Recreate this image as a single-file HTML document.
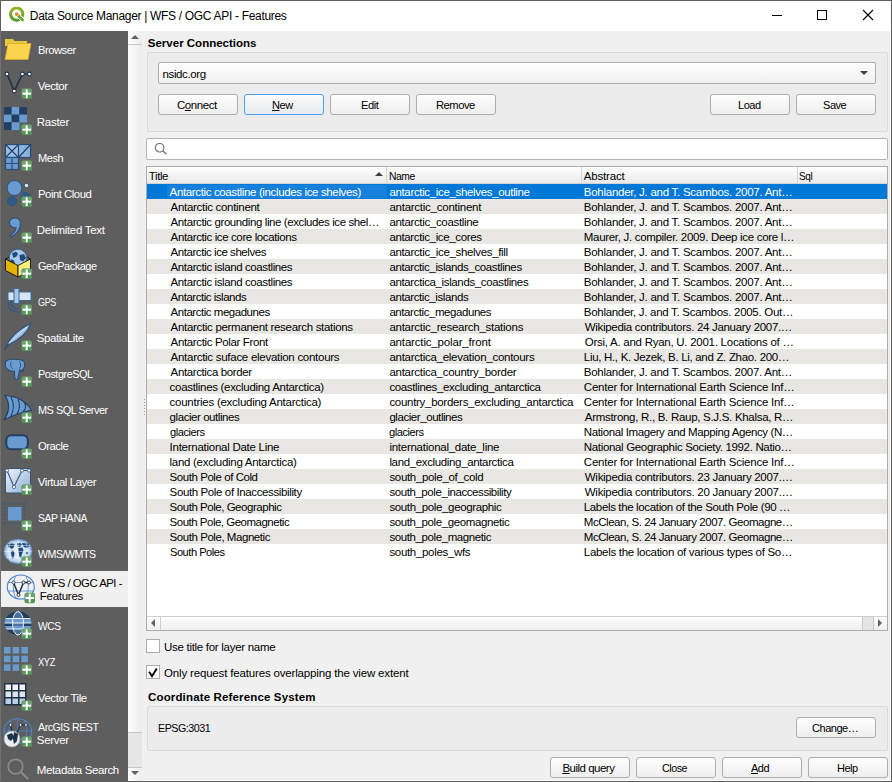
<!DOCTYPE html><html><head><meta charset='utf-8'><style>
*{box-sizing:border-box;margin:0;padding:0}
html,body{width:892px;height:782px;overflow:hidden;background:#f0f0f0}
body{font-family:"Liberation Sans",sans-serif;font-size:12px;color:#000;position:relative}
.a{position:absolute}
.tx{position:absolute;white-space:nowrap;line-height:14px}
.tx u{text-decoration:underline;text-decoration-thickness:1px;text-underline-offset:0.5px}
.btn{position:absolute;height:21px;border:1px solid #adadad;border-radius:3px;background:linear-gradient(#fdfdfd,#efefef)}
.grp{position:absolute;border:1px solid #dadada;border-radius:2px;background:#ececec}
</style></head><body>
<div class='a' style='left:0;top:0;width:892px;height:782px;border:1px solid #5f5f5f;background:#f0f0f0'></div>
<div class='a' style='left:1px;top:1px;width:890px;height:30px;background:#fff'></div>
<svg class='a' style='left:8px;top:7px' width='18' height='17' viewBox='0 0 18 17'>
<defs><linearGradient id='lg' x1='0' y1='0' x2='0' y2='1'><stop offset='0' stop-color='#93b41c'/><stop offset='1' stop-color='#589a2c'/></linearGradient></defs>
<path d='M11.75 12.3 A6.1 6.1 0 1 1 13.98 10.05' fill='none' stroke='url(#lg)' stroke-width='3'/>
<path d='M10.2 8.7 L14.8 13' stroke='#fff' stroke-width='4.4' stroke-linecap='round'/>
<path d='M10.2 8.7 L14.8 13' stroke='#64a83a' stroke-width='2.6' stroke-linecap='round'/>
<circle cx='8.7' cy='7.3' r='1.8' fill='#f07a1a'/>
<circle cx='9.8' cy='8.4' r='1' fill='#f3c23a'/>
</svg>
<div id='ttl' class='tx' style='left:29.80px;top:9px;font-size:12px;font-weight:normal;letter-spacing:-0.315px;color:#000'>Data Source Manager | WFS / OGC API - Features</div>
<div class='a' style='left:772px;top:15px;width:10px;height:1px;background:#000'></div>
<div class='a' style='left:817px;top:10px;width:10px;height:10px;border:1px solid #000'></div>
<svg class='a' style='left:862px;top:9px' width='12' height='12' viewBox='0 0 12 12'><path d='M1 1 L11 11 M11 1 L1 11' stroke='#000' stroke-width='1.1'/></svg>
<div class='a' style='left:1px;top:31px;width:127px;height:750px;background:#5e5e5e'></div>
<div class='a' style='left:1px;top:571px;width:127px;height:36px;background:#f0f0f0'></div>
<div class='a' style='left:0;top:31px;width:1px;height:750px;background:#727272'></div>
<div class='a' style='left:890px;top:31px;width:1px;height:750px;background:#fafafa'></div>
<div class='a' style='left:142px;top:780px;width:749px;height:1px;background:#fafafa'></div>
<svg class='a' style='left:0;top:31px' width='40' height='36' viewBox='0 0 40 36'><path d='M5 8 L13 8 L14.5 10 L27 10 L27 15 L5 15Z' fill='#e9c53e'/><path d='M8 12.5 L31 12.5 L28 28.5 L5 28.5Z' fill='#f9d44c' stroke='#d6ae2c' stroke-width='0.8'/></svg>
<svg class='a' style='left:0;top:67px' width='40' height='36' viewBox='0 0 40 36'><path d='M7 7 L14.3 24 L22.4 7 L29.4 7' fill='none' stroke='#22324a' stroke-width='1.7'/><circle cx='7' cy='7' r='1.9' fill='#fff' stroke='#22324a' stroke-width='1.1'/><circle cx='22.4' cy='7' r='1.9' fill='#fff' stroke='#22324a' stroke-width='1.1'/><circle cx='29.4' cy='7' r='1.9' fill='#fff' stroke='#22324a' stroke-width='1.1'/><circle cx='14.3' cy='24' r='1.9' fill='#fff' stroke='#22324a' stroke-width='1.1'/><rect x='21.5' y='21.5' width='10.5' height='10.5' rx='2' fill='#55955a'/><rect x='21.5' y='21.5' width='10.5' height='5' rx='2' fill='#7fb07f' opacity='0.5'/><rect x='25.7' y='22.4' width='2' height='8.7' fill='#fff'/><rect x='22.4' y='25.7' width='8.7' height='2' fill='#fff'/></svg>
<svg class='a' style='left:0;top:103px' width='40' height='36' viewBox='0 0 40 36'><rect x='4.00' y='4.00' width='7.72' height='7.72' fill='#213e63'/><rect x='11.67' y='4.00' width='7.72' height='7.72' fill='#6a9bd0'/><rect x='19.34' y='4.00' width='7.72' height='7.72' fill='#213e63'/><rect x='4.00' y='11.67' width='7.72' height='7.72' fill='#6a9bd0'/><rect x='11.67' y='11.67' width='7.72' height='7.72' fill='#213e63'/><rect x='19.34' y='11.67' width='7.72' height='7.72' fill='#6a9bd0'/><rect x='4.00' y='19.34' width='7.72' height='7.72' fill='#213e63'/><rect x='11.67' y='19.34' width='7.72' height='7.72' fill='#6a9bd0'/><rect x='21.5' y='21.5' width='10.5' height='10.5' rx='2' fill='#55955a'/><rect x='21.5' y='21.5' width='10.5' height='5' rx='2' fill='#7fb07f' opacity='0.5'/><rect x='25.7' y='22.4' width='2' height='8.7' fill='#fff'/><rect x='22.4' y='25.7' width='8.7' height='2' fill='#fff'/></svg>
<svg class='a' style='left:0;top:139px' width='40' height='36' viewBox='0 0 40 36'><rect x='5.5' y='5.5' width='13' height='13' fill='#9dc0e6' stroke='#2a4d78' stroke-width='1.2'/><path d='M5.5 5.5 L18.5 18.5 M18.5 5.5 L5.5 18.5' stroke='#213e63' stroke-width='1.2'/><rect x='18.5' y='5.5' width='12' height='13' fill='#8ab3e0' stroke='#2a4d78' stroke-width='1.2'/><path d='M30.5 5.5 L18.5 18.5' stroke='#213e63' stroke-width='1.2'/><rect x='5.5' y='18.5' width='13' height='12' fill='#6a9bd0' stroke='#2a4d78' stroke-width='1.2'/><path d='M12 18.5 L12 30.5 M5.5 24.5 L18.5 24.5' stroke='#2a4d78' stroke-width='1.2'/><rect x='21.5' y='21.5' width='10.5' height='10.5' rx='2' fill='#55955a'/><rect x='21.5' y='21.5' width='10.5' height='5' rx='2' fill='#7fb07f' opacity='0.5'/><rect x='25.7' y='22.4' width='2' height='8.7' fill='#fff'/><rect x='22.4' y='25.7' width='8.7' height='2' fill='#fff'/></svg>
<svg class='a' style='left:0;top:175px' width='40' height='36' viewBox='0 0 40 36'><circle cx='14.5' cy='13' r='7.5' fill='#6a9bd0' stroke='#2a4d78' stroke-width='1'/><circle cx='26.5' cy='10.5' r='2.3' fill='#d5e3f0' stroke='#2a4d78' stroke-width='1'/><circle cx='12' cy='26' r='4.5' fill='#2f5a88' stroke='#2a4d78' stroke-width='0.8'/><circle cx='25.5' cy='22' r='5' fill='#2f5a88'/><rect x='21.5' y='21.5' width='10.5' height='10.5' rx='2' fill='#55955a'/><rect x='21.5' y='21.5' width='10.5' height='5' rx='2' fill='#7fb07f' opacity='0.5'/><rect x='25.7' y='22.4' width='2' height='8.7' fill='#fff'/><rect x='22.4' y='25.7' width='8.7' height='2' fill='#fff'/></svg>
<svg class='a' style='left:0;top:211px' width='40' height='36' viewBox='0 0 40 36'><path d='M9.5 12 C9.5 8.5 12 7 15 7 C18.5 7 20.5 9.5 20.5 13 C20.5 18 17 22.5 11.5 26 L10.2 24.8 C14 22 15.8 19.5 16 16.8 C12.5 16.8 9.5 15 9.5 12Z' fill='#6a9bd0' stroke='#2a4d78' stroke-width='1.1'/><rect x='21.5' y='21.5' width='10.5' height='10.5' rx='2' fill='#55955a'/><rect x='21.5' y='21.5' width='10.5' height='5' rx='2' fill='#7fb07f' opacity='0.5'/><rect x='25.7' y='22.4' width='2' height='8.7' fill='#fff'/><rect x='22.4' y='25.7' width='8.7' height='2' fill='#fff'/></svg>
<svg class='a' style='left:0;top:247px' width='40' height='36' viewBox='0 0 40 36'><circle cx='18' cy='11' r='8.8' fill='#a9c9ea' stroke='#2a5a90' stroke-width='0.8'/><path d='M12 6.5 L16 4.5 L18 7 L16.5 9.5 L13.5 11Z M19.5 8 L24 7 L26 11 L23 14.5 L20 13Z M11 12 L14 13.5 L15 17 L12 18 L10 15Z' fill='#1f4a7a'/><path d='M5.5 12 L9 10 M30.5 12 L27 10' stroke='#111' stroke-width='0.9'/><path d='M5.5 12 L18 18.5 L18 30 L5.5 23.5Z' fill='#e2b400' stroke='#111' stroke-width='0.9'/><path d='M18 18.5 L30.5 12 L30.5 23.5 L18 30Z' fill='#f8ef7a' stroke='#111' stroke-width='0.9'/><rect x='21.5' y='21.5' width='10.5' height='10.5' rx='2' fill='#55955a'/><rect x='21.5' y='21.5' width='10.5' height='5' rx='2' fill='#7fb07f' opacity='0.5'/><rect x='25.7' y='22.4' width='2' height='8.7' fill='#fff'/><rect x='22.4' y='25.7' width='8.7' height='2' fill='#fff'/></svg>
<svg class='a' style='left:0;top:283px' width='40' height='36' viewBox='0 0 40 36'><rect x='8' y='9' width='23' height='8.5' fill='#d8e6f4' stroke='#3a6a9a' stroke-width='1'/><rect x='14' y='5.5' width='5' height='15' fill='#a8c6e6' stroke='#3a6a9a' stroke-width='1'/><path d='M16.5 20.5 L16.5 23' stroke='#3a6a9a' stroke-width='1'/><path d='M11 18 C11 23 14 26 19 26 M8 19 C8 26 12 29 19 29.5' fill='none' stroke='#2d5a8a' stroke-width='1.2'/><rect x='21.5' y='21.5' width='10.5' height='10.5' rx='2' fill='#55955a'/><rect x='21.5' y='21.5' width='10.5' height='5' rx='2' fill='#7fb07f' opacity='0.5'/><rect x='25.7' y='22.4' width='2' height='8.7' fill='#fff'/><rect x='22.4' y='25.7' width='8.7' height='2' fill='#fff'/></svg>
<svg class='a' style='left:0;top:319px' width='40' height='36' viewBox='0 0 40 36'><path d='M4.5 31 C8 22 14 12 31 4.5 C28 12 22 20 8 26 Z' fill='#9dbde0' stroke='#2a4d78' stroke-width='1.1'/><path d='M9 24 L27 8' stroke='#e8f0f8' stroke-width='0.9'/><rect x='21.5' y='21.5' width='10.5' height='10.5' rx='2' fill='#55955a'/><rect x='21.5' y='21.5' width='10.5' height='5' rx='2' fill='#7fb07f' opacity='0.5'/><rect x='25.7' y='22.4' width='2' height='8.7' fill='#fff'/><rect x='22.4' y='25.7' width='8.7' height='2' fill='#fff'/></svg>
<svg class='a' style='left:0;top:355px' width='40' height='36' viewBox='0 0 40 36'><path d='M7.5 5 C11 3.8 20 3.8 23.5 6 C25.3 8 25 12.5 23 14.5 C22 15.5 20.5 15.5 19.5 15 C19 18 18.8 21 17.5 24 C16.8 25 15.5 24.8 15 23.5 C14.3 21 14.5 18 14.5 16 C12 16.5 9 16 7 14 C4.5 11.5 4.5 6.5 7.5 5Z' fill='#6a9bd0' stroke='#2a4d78' stroke-width='1.1'/><path d='M11.5 6.5 C10 9 10.5 12.5 13 14 M19.5 6.5 C21 8.5 21 11.5 19.5 13.5 M20 16.5 L24 16' fill='none' stroke='#2a4d78' stroke-width='0.9'/><rect x='21.5' y='21.5' width='10.5' height='10.5' rx='2' fill='#55955a'/><rect x='21.5' y='21.5' width='10.5' height='5' rx='2' fill='#7fb07f' opacity='0.5'/><rect x='25.7' y='22.4' width='2' height='8.7' fill='#fff'/><rect x='22.4' y='25.7' width='8.7' height='2' fill='#fff'/></svg>
<svg class='a' style='left:0;top:391px' width='40' height='36' viewBox='0 0 40 36'><path d='M5 4.5 C16 5 25 9 31.5 19 C23 21 13 24 4 29 C10 20 10 12 5 4.5Z' fill='#6a9bd0' stroke='#213e63' stroke-width='1.2'/><path d='M11 6 C14 12 14 19 11 25 M18 8 C20 13 20 18 17 23 M24 11 C26 14 26 18 23 21' fill='none' stroke='#213e63' stroke-width='1.1'/><rect x='21.5' y='21.5' width='10.5' height='10.5' rx='2' fill='#55955a'/><rect x='21.5' y='21.5' width='10.5' height='5' rx='2' fill='#7fb07f' opacity='0.5'/><rect x='25.7' y='22.4' width='2' height='8.7' fill='#fff'/><rect x='22.4' y='25.7' width='8.7' height='2' fill='#fff'/></svg>
<svg class='a' style='left:0;top:427px' width='40' height='36' viewBox='0 0 40 36'><rect x='6.3' y='8.3' width='21.5' height='14' rx='5' fill='#6a9bd0' stroke='#213e63' stroke-width='2'/><rect x='21.5' y='21.5' width='10.5' height='10.5' rx='2' fill='#55955a'/><rect x='21.5' y='21.5' width='10.5' height='5' rx='2' fill='#7fb07f' opacity='0.5'/><rect x='25.7' y='22.4' width='2' height='8.7' fill='#fff'/><rect x='22.4' y='25.7' width='8.7' height='2' fill='#fff'/></svg>
<svg class='a' style='left:0;top:463px' width='40' height='36' viewBox='0 0 40 36'><defs><linearGradient id='vg' x1='0' y1='0' x2='1' y2='1'><stop offset='0' stop-color='#eef3f9'/><stop offset='1' stop-color='#8fb0d6'/></linearGradient></defs><rect x='5.5' y='5.5' width='25' height='24.5' rx='2' fill='url(#vg)' stroke='#34557d' stroke-width='1'/><path d='M7 7.5 L14 24 L22 7.5 L29 7.5' fill='none' stroke='#34557d' stroke-width='1.1'/><circle cx='7' cy='7.5' r='1.6' fill='#fff' stroke='#34557d' stroke-width='0.8'/><circle cx='22' cy='7.5' r='1.6' fill='#fff' stroke='#34557d' stroke-width='0.8'/><circle cx='29' cy='7.5' r='1.6' fill='#fff' stroke='#34557d' stroke-width='0.8'/><circle cx='14' cy='24' r='1.6' fill='#fff' stroke='#34557d' stroke-width='0.8'/><rect x='21.5' y='21.5' width='10.5' height='10.5' rx='2' fill='#55955a'/><rect x='21.5' y='21.5' width='10.5' height='5' rx='2' fill='#7fb07f' opacity='0.5'/><rect x='25.7' y='22.4' width='2' height='8.7' fill='#fff'/><rect x='22.4' y='25.7' width='8.7' height='2' fill='#fff'/></svg>
<svg class='a' style='left:0;top:499px' width='40' height='36' viewBox='0 0 40 36'><rect x='8' y='8' width='13.5' height='13.5' fill='#6a9bd0'/><rect x='3.7' y='4.2' width='1.6' height='1.6' fill='#2f5a88'/><rect x='3.7' y='23.7' width='1.6' height='1.6' fill='#2f5a88'/><rect x='3.7' y='3.7' width='1.6' height='1.6' fill='#2f5a88'/><rect x='23.7' y='3.7' width='1.6' height='1.6' fill='#2f5a88'/><rect x='7.6' y='4.2' width='1.6' height='1.6' fill='#2f5a88'/><rect x='7.6' y='23.7' width='1.6' height='1.6' fill='#2f5a88'/><rect x='3.7' y='7.6' width='1.6' height='1.6' fill='#2f5a88'/><rect x='23.7' y='7.6' width='1.6' height='1.6' fill='#2f5a88'/><rect x='11.5' y='4.2' width='1.6' height='1.6' fill='#2f5a88'/><rect x='11.5' y='23.7' width='1.6' height='1.6' fill='#2f5a88'/><rect x='3.7' y='11.5' width='1.6' height='1.6' fill='#2f5a88'/><rect x='23.7' y='11.5' width='1.6' height='1.6' fill='#2f5a88'/><rect x='15.4' y='4.2' width='1.6' height='1.6' fill='#2f5a88'/><rect x='15.4' y='23.7' width='1.6' height='1.6' fill='#2f5a88'/><rect x='3.7' y='15.4' width='1.6' height='1.6' fill='#2f5a88'/><rect x='23.7' y='15.4' width='1.6' height='1.6' fill='#2f5a88'/><rect x='19.3' y='4.2' width='1.6' height='1.6' fill='#2f5a88'/><rect x='19.3' y='23.7' width='1.6' height='1.6' fill='#2f5a88'/><rect x='3.7' y='19.3' width='1.6' height='1.6' fill='#2f5a88'/><rect x='23.7' y='19.3' width='1.6' height='1.6' fill='#2f5a88'/><rect x='23.2' y='4.2' width='1.6' height='1.6' fill='#2f5a88'/><rect x='23.2' y='23.7' width='1.6' height='1.6' fill='#2f5a88'/><rect x='3.7' y='23.2' width='1.6' height='1.6' fill='#2f5a88'/><rect x='23.7' y='23.2' width='1.6' height='1.6' fill='#2f5a88'/><rect x='21.5' y='21.5' width='10.5' height='10.5' rx='2' fill='#55955a'/><rect x='21.5' y='21.5' width='10.5' height='5' rx='2' fill='#7fb07f' opacity='0.5'/><rect x='25.7' y='22.4' width='2' height='8.7' fill='#fff'/><rect x='22.4' y='25.7' width='8.7' height='2' fill='#fff'/></svg>
<svg class='a' style='left:0;top:535px' width='40' height='36' viewBox='0 0 40 36'><defs><radialGradient id='wg' cx='0.5' cy='0.5' r='0.55'><stop offset='0' stop-color='#eef4fa'/><stop offset='0.7' stop-color='#c5d9ee'/><stop offset='1' stop-color='#6e9bd0'/></radialGradient></defs><ellipse cx='18' cy='16.4' rx='14' ry='12.1' fill='url(#wg)' stroke='#5a8ac0' stroke-width='0.9'/><path d='M7.5 9.5 L11 8.5 L14.5 9 L14 12 L12 14 L10.5 13 L8.5 12Z M11.5 15.5 L14 16 L14.5 19 L13 24 L11.8 22 L11 18Z M17 8.5 L20.5 8 L22 10 L20 12 L17.5 11.5Z M18 13 L22.5 12.5 L23.5 15.5 L22 19 L21 23 L19.5 22 L18.5 17Z M22 8 L28 8.5 L29.5 11 L27 13 L24 12 L22.5 10Z M26 17 L28 16.5 L28 19 L26.5 19.5Z' fill='#1f4a7a'/><path d='M4.5 16.4 L31.5 16.4 M6 10.5 L30 10.5 M6 22.3 L30 22.3 M18 4.3 L18 28.5 M11 5.5 C8 11 8 22 11 27.3 M25 5.5 C28 11 28 22 25 27.3' fill='none' stroke='#ffffff' stroke-width='0.6' opacity='0.75'/><rect x='21.5' y='21.5' width='10.5' height='10.5' rx='2' fill='#55955a'/><rect x='21.5' y='21.5' width='10.5' height='5' rx='2' fill='#7fb07f' opacity='0.5'/><rect x='25.7' y='22.4' width='2' height='8.7' fill='#fff'/><rect x='22.4' y='25.7' width='8.7' height='2' fill='#fff'/></svg>
<svg class='a' style='left:0;top:571px' width='40' height='36' viewBox='0 0 40 36'><ellipse cx='20.8' cy='16' rx='13.5' ry='12' fill='none' stroke='#4a86d0' stroke-width='1.1'/><path d='M7.8 11.5 L33.8 11.5 M7.5 20 L34 20 M16 4.8 C12.5 10 12.5 22 16 27.3 M25.6 4.8 C29.1 10 29.1 22 25.6 27.3' fill='none' stroke='#4a86d0' stroke-width='0.8'/><path d='M13.5 11.5 L18.5 24 L23.5 11.5 L29 11.5' fill='none' stroke='#1f2f44' stroke-width='1.5'/><circle cx='13.5' cy='11.5' r='1.5' fill='#fff' stroke='#1f2f44' stroke-width='0.9'/><circle cx='23.5' cy='11.5' r='1.5' fill='#fff' stroke='#1f2f44' stroke-width='0.9'/><circle cx='29' cy='11.5' r='1.5' fill='#fff' stroke='#1f2f44' stroke-width='0.9'/><circle cx='18.5' cy='24' r='1.5' fill='#fff' stroke='#1f2f44' stroke-width='0.9'/><rect x='24.5' y='21.8' width='10.5' height='10.5' rx='2' fill='#55955a'/><rect x='24.5' y='21.8' width='10.5' height='5' rx='2' fill='#7fb07f' opacity='0.5'/><rect x='28.7' y='22.7' width='2' height='8.7' fill='#fff'/><rect x='25.4' y='26.0' width='8.7' height='2' fill='#fff'/></svg>
<svg class='a' style='left:0;top:607px' width='40' height='36' viewBox='0 0 40 36'><defs><clipPath id='wcsc'><ellipse cx='18' cy='16.3' rx='13.5' ry='11.7'/></clipPath></defs><ellipse cx='18' cy='16.3' rx='13.5' ry='11.7' fill='#213e63'/><g clip-path='url(#wcsc)'><path d='M0 11.5 L36 11.5 L36 16 L0 16Z M0 19 L36 19 L36 22 L0 22Z' fill='#6a9bd0'/><ellipse cx='18' cy='16.3' rx='5.5' ry='11.7' fill='#6a9bd0' opacity='0.55'/><path d='M0 11.5 L36 11.5 M0 16 L36 16 M0 22 L36 22' stroke='#fff' stroke-width='0.9'/></g><ellipse cx='18' cy='16.3' rx='5.5' ry='11.7' fill='none' stroke='#fff' stroke-width='0.9'/><rect x='21.5' y='21.5' width='10.5' height='10.5' rx='2' fill='#55955a'/><rect x='21.5' y='21.5' width='10.5' height='5' rx='2' fill='#7fb07f' opacity='0.5'/><rect x='25.7' y='22.4' width='2' height='8.7' fill='#fff'/><rect x='22.4' y='25.7' width='8.7' height='2' fill='#fff'/></svg>
<svg class='a' style='left:0;top:643px' width='40' height='36' viewBox='0 0 40 36'><rect x='4.0' y='4.0' width='6.5' height='6.5' fill='#6a9bd0'/><rect x='12.7' y='4.0' width='6.5' height='6.5' fill='#6a9bd0'/><rect x='21.4' y='4.0' width='6.5' height='6.5' fill='#6a9bd0'/><rect x='4.0' y='12.7' width='6.5' height='6.5' fill='#6a9bd0'/><rect x='12.7' y='12.7' width='6.5' height='6.5' fill='#6a9bd0'/><rect x='21.4' y='12.7' width='6.5' height='6.5' fill='#6a9bd0'/><rect x='4.0' y='21.4' width='6.5' height='6.5' fill='#6a9bd0'/><rect x='12.7' y='21.4' width='6.5' height='6.5' fill='#6a9bd0'/><rect x='21.5' y='21.5' width='10.5' height='10.5' rx='2' fill='#55955a'/><rect x='21.5' y='21.5' width='10.5' height='5' rx='2' fill='#7fb07f' opacity='0.5'/><rect x='25.7' y='22.4' width='2' height='8.7' fill='#fff'/><rect x='22.4' y='25.7' width='8.7' height='2' fill='#fff'/></svg>
<svg class='a' style='left:0;top:679px' width='40' height='36' viewBox='0 0 40 36'><rect x='4' y='4' width='22.5' height='22.5' fill='#1f3146'/><rect x='5.5' y='5.5' width='5.5' height='5.5' fill='#f2f2f2'/><rect x='12.5' y='5.5' width='5.5' height='5.5' fill='#f2f2f2'/><rect x='19.5' y='5.5' width='5.5' height='5.5' fill='#f2f2f2'/><rect x='5.5' y='12.5' width='5.5' height='5.5' fill='#dce6f0'/><rect x='12.5' y='12.5' width='5.5' height='5.5' fill='#dce6f0'/><rect x='19.5' y='12.5' width='5.5' height='5.5' fill='#dce6f0'/><rect x='5.5' y='19.5' width='5.5' height='5.5' fill='#b8cfe6'/><rect x='12.5' y='19.5' width='5.5' height='5.5' fill='#b8cfe6'/><rect x='19.5' y='19.5' width='5.5' height='5.5' fill='#b8cfe6'/><rect x='21.5' y='21.5' width='10.5' height='10.5' rx='2' fill='#55955a'/><rect x='21.5' y='21.5' width='10.5' height='5' rx='2' fill='#7fb07f' opacity='0.5'/><rect x='25.7' y='22.4' width='2' height='8.7' fill='#fff'/><rect x='22.4' y='25.7' width='8.7' height='2' fill='#fff'/></svg>
<svg class='a' style='left:0;top:715px' width='40' height='36' viewBox='0 0 40 36'><ellipse cx='17.8' cy='16.2' rx='13.9' ry='12.4' fill='none' stroke='#4a86d0' stroke-width='1.1'/><path d='M4 16 L31.5 16 M17.8 4 L17.8 28.6 M11 6 C8 12 8 21 11 26.5 M24.5 6 C27.5 12 27.5 21 24.5 26.5' fill='none' stroke='#4a86d0' stroke-width='0.8'/><path d='M10.5 10 L13 20 M20.5 10 L16 20 M20.5 10 L26 10' stroke='#1f2f44' stroke-width='1.2'/><circle cx='10.5' cy='10' r='1.4' fill='#fff' stroke='#1f2f44' stroke-width='0.8'/><circle cx='20.5' cy='10' r='1.4' fill='#fff' stroke='#1f2f44' stroke-width='0.8'/><circle cx='26' cy='10' r='1.4' fill='#fff' stroke='#1f2f44' stroke-width='0.8'/><circle cx='12' cy='24' r='8' fill='#e8eef4' stroke='#a0a8b0' stroke-width='0.8'/><path d='M7 20 L12 18 L14 22 L11 26 L8 24Z M14 17 L18 19 L17 26 L14 29 L13 24Z' fill='#1f2f44'/><rect x='21.5' y='21.5' width='10.5' height='10.5' rx='2' fill='#55955a'/><rect x='21.5' y='21.5' width='10.5' height='5' rx='2' fill='#7fb07f' opacity='0.5'/><rect x='25.7' y='22.4' width='2' height='8.7' fill='#fff'/><rect x='22.4' y='25.7' width='8.7' height='2' fill='#fff'/></svg>
<svg class='a' style='left:0;top:751px' width='40' height='36' viewBox='0 0 40 36'><circle cx='15.5' cy='15.6' r='7.3' fill='none' stroke='#8a8a8a' stroke-width='1.8'/><path d='M20.8 21 L27.5 27.5' stroke='#8a8a8a' stroke-width='2.2' stroke-linecap='round'/></svg>
<div id='s0' class='tx' style='left:37.80px;top:43px;font-size:11.5px;font-weight:normal;letter-spacing:-0.500px;color:#fff;transform:scaleX(0.9752);transform-origin:0 0'>Browser</div>
<div id='s1' class='tx' style='left:37.80px;top:79px;font-size:11.5px;font-weight:normal;letter-spacing:-0.460px;color:#fff'>Vector</div>
<div id='s2' class='tx' style='left:36.80px;top:115px;font-size:11.5px;font-weight:normal;letter-spacing:-0.280px;color:#fff'>Raster</div>
<div id='s3' class='tx' style='left:37.80px;top:151px;font-size:11.5px;font-weight:normal;letter-spacing:-0.500px;color:#fff;transform:scaleX(0.9622);transform-origin:0 0'>Mesh</div>
<div id='s4' class='tx' style='left:37.80px;top:187px;font-size:11.5px;font-weight:normal;letter-spacing:-0.500px;color:#fff;transform:scaleX(0.9873);transform-origin:0 0'>Point Cloud</div>
<div id='s5' class='tx' style='left:36.80px;top:223px;font-size:11.5px;font-weight:normal;letter-spacing:-0.296px;color:#fff'>Delimited Text</div>
<div id='s6' class='tx' style='left:37.80px;top:259px;font-size:11.5px;font-weight:normal;letter-spacing:-0.500px;color:#fff;transform:scaleX(0.9516);transform-origin:0 0'>GeoPackage</div>
<div id='s7' class='tx' style='left:37.80px;top:295px;font-size:11.5px;font-weight:normal;letter-spacing:-0.500px;color:#fff;transform:scaleX(0.7853);transform-origin:0 0'>GPS</div>
<div id='s8' class='tx' style='left:36.80px;top:331px;font-size:11.5px;font-weight:normal;letter-spacing:-0.422px;color:#fff'>SpatiaLite</div>
<div id='s9' class='tx' style='left:37.80px;top:367px;font-size:11.5px;font-weight:normal;letter-spacing:-0.500px;color:#fff;transform:scaleX(0.9486);transform-origin:0 0'>PostgreSQL</div>
<div id='s10' class='tx' style='left:37.80px;top:403px;font-size:11.5px;font-weight:normal;letter-spacing:-0.500px;color:#fff;transform:scaleX(0.9464);transform-origin:0 0'>MS SQL Server</div>
<div id='s11' class='tx' style='left:37.80px;top:439px;font-size:11.5px;font-weight:normal;letter-spacing:-0.500px;color:#fff;transform:scaleX(0.9826);transform-origin:0 0'>Oracle</div>
<div id='s12' class='tx' style='left:37.80px;top:475px;font-size:11.5px;font-weight:normal;letter-spacing:-0.469px;color:#fff'>Virtual Layer</div>
<div id='s13' class='tx' style='left:37.80px;top:511px;font-size:11.5px;font-weight:normal;letter-spacing:-0.500px;color:#fff;transform:scaleX(0.9079);transform-origin:0 0'>SAP HANA</div>
<div id='s14' class='tx' style='left:37.80px;top:547px;font-size:11.5px;font-weight:normal;letter-spacing:-0.500px;color:#fff;transform:scaleX(0.9224);transform-origin:0 0'>WMS/WMTS</div>
<div id='s15a' class='tx' style='left:40.80px;top:576px;font-size:11.5px;font-weight:normal;letter-spacing:-0.500px;color:#000;transform:scaleX(0.9881);transform-origin:0 0'>WFS / OGC API -</div>
<div id='s15b' class='tx' style='left:39.80px;top:589px;font-size:11.5px;font-weight:normal;letter-spacing:-0.274px;color:#000'>Features</div>
<div id='s16' class='tx' style='left:37.80px;top:619px;font-size:11.5px;font-weight:normal;letter-spacing:-0.500px;color:#fff;transform:scaleX(0.8926);transform-origin:0 0'>WCS</div>
<div id='s17' class='tx' style='left:37.80px;top:655px;font-size:11.5px;font-weight:normal;letter-spacing:-0.500px;color:#fff;transform:scaleX(0.8107);transform-origin:0 0'>XYZ</div>
<div id='s18' class='tx' style='left:37.80px;top:691px;font-size:11.5px;font-weight:normal;letter-spacing:-0.430px;color:#fff'>Vector Tile</div>
<div id='s19a' class='tx' style='left:37.80px;top:720px;font-size:11.5px;font-weight:normal;letter-spacing:-0.500px;color:#fff;transform:scaleX(0.9242);transform-origin:0 0'>ArcGIS REST</div>
<div id='s19b' class='tx' style='left:36.80px;top:733px;font-size:11.5px;font-weight:normal;letter-spacing:-0.300px;color:#fff'>Server</div>
<div id='s20' class='tx' style='left:36.80px;top:763px;font-size:11.5px;font-weight:normal;letter-spacing:-0.365px;color:#fff'>Metadata Search</div>
<div class='a' style='left:128px;top:31px;width:14px;height:750px;background:linear-gradient(90deg,#fdfdfd,#ececec)'></div>
<div class='a' style='left:128px;top:44px;width:14px;height:1px;background:#c8c8c8'></div>
<svg class='a' style='left:131px;top:35px' width='8' height='4'><path d='M0 4 L4 0 L8 4Z' fill='#606060'/></svg>
<div class='a' style='left:128px;top:732px;width:14px;height:36px;background:#e6e6e6;border-top:1px solid #c8c8c8;border-bottom:1px solid #c8c8c8'></div>
<svg class='a' style='left:131px;top:771px' width='8' height='4'><path d='M0 0 L8 0 L4 4Z' fill='#606060'/></svg>
<div id='sc' class='tx' style='left:147.80px;top:36px;font-size:11.5px;font-weight:bold;letter-spacing:-0.000px;color:#000'>Server Connections</div>
<div class='grp' style='left:147px;top:52px;width:741px;height:80px'></div>
<div class='a' style='left:158px;top:62px;width:718px;height:22px;border:1px solid #adadad;border-radius:2px;background:linear-gradient(#fdfdfd,#f1f1f1)'></div>
<div id='combo' class='tx' style='left:162.60px;top:67px;font-size:11.5px;font-weight:normal;letter-spacing:-0.400px;color:#000'>nsidc.org</div>
<svg class='a' style='left:860px;top:71px' width='8' height='4'><path d='M0 0 L8 0 L4 4Z' fill='#404040'/></svg>
<div class='btn' style='left:158px;top:94px;width:80px;'></div>
<div id='b_Connect' class='tx' style='left:177.00px;top:98px;font-size:11.5px;font-weight:normal;letter-spacing:-0.450px;color:#000'>C<u>o</u>nnect</div>
<div class='btn' style='left:244px;top:94px;width:80px;border-color:#4aa3f5;background:linear-gradient(#fbfbfb,#e8eaed);'></div>
<div id='b_New' class='tx' style='left:272.20px;top:98px;font-size:11.5px;font-weight:normal;letter-spacing:-0.500px;color:#000;transform:scaleX(0.9588);transform-origin:0 0'><u>N</u>ew</div>
<div class='btn' style='left:330px;top:94px;width:80px;'></div>
<div id='b_Edit' class='tx' style='left:360.80px;top:98px;font-size:11.5px;font-weight:normal;letter-spacing:-0.500px;color:#000;transform:scaleX(0.9687);transform-origin:0 0'>Edit</div>
<div class='btn' style='left:416px;top:94px;width:80px;'></div>
<div id='b_Remove' class='tx' style='left:435.60px;top:98px;font-size:11.5px;font-weight:normal;letter-spacing:-0.500px;color:#000;transform:scaleX(0.9758);transform-origin:0 0'>Remove</div>
<div class='btn' style='left:710px;top:94px;width:80px;'></div>
<div id='b_Load' class='tx' style='left:737.60px;top:98px;font-size:11.5px;font-weight:normal;letter-spacing:-0.500px;color:#000;transform:scaleX(0.9598);transform-origin:0 0'>Load</div>
<div class='btn' style='left:796px;top:94px;width:80px;'></div>
<div id='b_Save' class='tx' style='left:823.20px;top:98px;font-size:11.5px;font-weight:normal;letter-spacing:-0.500px;color:#000;transform:scaleX(0.9618);transform-origin:0 0'>Save</div>
<div class='a' style='left:146px;top:138px;width:742px;height:22px;border:1px solid #b4b4b4;border-radius:2px;background:#fff'></div>
<svg class='a' style='left:154px;top:143px' width='13' height='12' viewBox='0 0 13 12'><circle cx='5.6' cy='4.7' r='4.3' fill='none' stroke='#787878' stroke-width='1.2'/><path d='M8.8 7.8 L12.4 11.3' stroke='#787878' stroke-width='1.5'/></svg>
<div class='a' style='left:146px;top:166px;width:742px;height:465px;border:1px solid #acacac;background:#fff'></div>
<div class='a' style='left:147px;top:167px;width:740px;height:17px;background:linear-gradient(#ffffff,#e9e9e9);border-bottom:1px solid #d5d5d5'></div>
<div class='a' style='left:386px;top:167px;width:1px;height:16px;background:#d5d5d5'></div>
<div class='a' style='left:581px;top:167px;width:1px;height:16px;background:#d5d5d5'></div>
<div class='a' style='left:797px;top:167px;width:1px;height:16px;background:#d5d5d5'></div>
<svg class='a' style='left:375px;top:172px' width='8' height='4'><path d='M0 4 L4 0 L8 4Z' fill='#404040'/></svg>
<div id='h_t' class='tx' style='left:148.80px;top:169px;font-size:11.5px;font-weight:normal;letter-spacing:-0.400px;color:#000'>Title</div>
<div id='h_n' class='tx' style='left:388.80px;top:169px;font-size:11.5px;font-weight:normal;letter-spacing:-0.500px;color:#000;transform:scaleX(0.8972);transform-origin:0 0'>Name</div>
<div id='h_a' class='tx' style='left:583.80px;top:169px;font-size:11.5px;font-weight:normal;letter-spacing:-0.187px;color:#000'>Abstract</div>
<div id='h_s' class='tx' style='left:799.40px;top:169px;font-size:11.5px;font-weight:normal;letter-spacing:-0.500px;color:#000;transform:scaleX(0.8727);transform-origin:0 0'>Sql</div>
<div class='a' style='left:147px;top:184px;width:740px;height:15px;background:#0078d7'></div>
<div class='a' style='left:167px;top:185px;width:220px;height:13px;background:#1581dc'></div>
<div id='r0t' class='tx' style='left:169.60px;top:185px;font-size:11.5px;font-weight:normal;letter-spacing:-0.361px;color:#fff'>Antarctic coastline (includes ice shelves)</div>
<div id='r0n' class='tx' style='left:389.40px;top:185px;font-size:11.5px;font-weight:normal;letter-spacing:-0.343px;color:#fff'>antarctic_ice_shelves_outline</div>
<div id='r0a' class='tx' style='left:583.80px;top:185px;font-size:11.5px;font-weight:normal;letter-spacing:-0.262px;color:#fff'>Bohlander, J. and T. Scambos. 2007. Ant…</div>
<div class='a' style='left:147px;top:199px;width:740px;height:15px;background:#e9e7e3'></div>
<div id='r1t' class='tx' style='left:170.60px;top:200px;font-size:11.5px;font-weight:normal;letter-spacing:-0.302px;color:#000'>Antarctic continent</div>
<div id='r1n' class='tx' style='left:389.40px;top:200px;font-size:11.5px;font-weight:normal;letter-spacing:-0.250px;color:#000'>antarctic_continent</div>
<div id='r1a' class='tx' style='left:583.80px;top:200px;font-size:11.5px;font-weight:normal;letter-spacing:-0.260px;color:#000'>Bohlander, J. and T. Scambos. 2007. Ant…</div>
<div id='r2t' class='tx' style='left:170.60px;top:215px;font-size:11.5px;font-weight:normal;letter-spacing:-0.406px;color:#000'>Antarctic grounding line (excludes ice shel…</div>
<div id='r2n' class='tx' style='left:389.40px;top:215px;font-size:11.5px;font-weight:normal;letter-spacing:-0.331px;color:#000'>antarctic_coastline</div>
<div id='r2a' class='tx' style='left:583.80px;top:215px;font-size:11.5px;font-weight:normal;letter-spacing:-0.262px;color:#000'>Bohlander, J. and T. Scambos. 2007. Ant…</div>
<div class='a' style='left:147px;top:229px;width:740px;height:15px;background:#e9e7e3'></div>
<div id='r3t' class='tx' style='left:170.60px;top:230px;font-size:11.5px;font-weight:normal;letter-spacing:-0.387px;color:#000'>Antarctic ice core locations</div>
<div id='r3n' class='tx' style='left:389.40px;top:230px;font-size:11.5px;font-weight:normal;letter-spacing:-0.360px;color:#000'>antarctic_ice_cores</div>
<div id='r3a' class='tx' style='left:583.80px;top:230px;font-size:11.5px;font-weight:normal;letter-spacing:-0.310px;color:#000'>Maurer, J. compiler. 2009. Deep ice core l…</div>
<div id='r4t' class='tx' style='left:170.60px;top:245px;font-size:11.5px;font-weight:normal;letter-spacing:-0.450px;color:#000'>Antarctic ice shelves</div>
<div id='r4n' class='tx' style='left:389.40px;top:245px;font-size:11.5px;font-weight:normal;letter-spacing:-0.340px;color:#000'>antarctic_ice_shelves_fill</div>
<div id='r4a' class='tx' style='left:583.80px;top:245px;font-size:11.5px;font-weight:normal;letter-spacing:-0.262px;color:#000'>Bohlander, J. and T. Scambos. 2007. Ant…</div>
<div class='a' style='left:147px;top:259px;width:740px;height:15px;background:#e9e7e3'></div>
<div id='r5t' class='tx' style='left:170.60px;top:260px;font-size:11.5px;font-weight:normal;letter-spacing:-0.398px;color:#000'>Antarctic island coastlines</div>
<div id='r5n' class='tx' style='left:389.40px;top:260px;font-size:11.5px;font-weight:normal;letter-spacing:-0.387px;color:#000'>antarctic_islands_coastlines</div>
<div id='r5a' class='tx' style='left:583.80px;top:260px;font-size:11.5px;font-weight:normal;letter-spacing:-0.260px;color:#000'>Bohlander, J. and T. Scambos. 2007. Ant…</div>
<div id='r6t' class='tx' style='left:170.60px;top:275px;font-size:11.5px;font-weight:normal;letter-spacing:-0.398px;color:#000'>Antarctic island coastlines</div>
<div id='r6n' class='tx' style='left:389.40px;top:275px;font-size:11.5px;font-weight:normal;letter-spacing:-0.369px;color:#000'>antarctica_islands_coastlines</div>
<div id='r6a' class='tx' style='left:583.80px;top:275px;font-size:11.5px;font-weight:normal;letter-spacing:-0.262px;color:#000'>Bohlander, J. and T. Scambos. 2007. Ant…</div>
<div class='a' style='left:147px;top:289px;width:740px;height:15px;background:#e9e7e3'></div>
<div id='r7t' class='tx' style='left:170.60px;top:290px;font-size:11.5px;font-weight:normal;letter-spacing:-0.480px;color:#000'>Antarctic islands</div>
<div id='r7n' class='tx' style='left:389.40px;top:290px;font-size:11.5px;font-weight:normal;letter-spacing:-0.395px;color:#000'>antarctic_islands</div>
<div id='r7a' class='tx' style='left:583.80px;top:290px;font-size:11.5px;font-weight:normal;letter-spacing:-0.260px;color:#000'>Bohlander, J. and T. Scambos. 2007. Ant…</div>
<div id='r8t' class='tx' style='left:170.60px;top:305px;font-size:11.5px;font-weight:normal;letter-spacing:-0.472px;color:#000'>Antarctic megadunes</div>
<div id='r8n' class='tx' style='left:389.40px;top:305px;font-size:11.5px;font-weight:normal;letter-spacing:-0.432px;color:#000'>antarctic_megadunes</div>
<div id='r8a' class='tx' style='left:583.80px;top:305px;font-size:11.5px;font-weight:normal;letter-spacing:-0.291px;color:#000'>Bohlander, J. and T. Scambos. 2005. Out…</div>
<div class='a' style='left:147px;top:319px;width:740px;height:15px;background:#e9e7e3'></div>
<div id='r9t' class='tx' style='left:170.60px;top:320px;font-size:11.5px;font-weight:normal;letter-spacing:-0.310px;color:#000'>Antarctic permanent research stations</div>
<div id='r9n' class='tx' style='left:389.40px;top:320px;font-size:11.5px;font-weight:normal;letter-spacing:-0.255px;color:#000'>antarctic_research_stations</div>
<div id='r9a' class='tx' style='left:584.80px;top:320px;font-size:11.5px;font-weight:normal;letter-spacing:-0.308px;color:#000'>Wikipedia contributors. 24 January 2007.…</div>
<div id='r10t' class='tx' style='left:170.60px;top:335px;font-size:11.5px;font-weight:normal;letter-spacing:-0.360px;color:#000'>Antarctic Polar Front</div>
<div id='r10n' class='tx' style='left:389.40px;top:335px;font-size:11.5px;font-weight:normal;letter-spacing:-0.165px;color:#000'>antarctic_polar_front</div>
<div id='r10a' class='tx' style='left:584.80px;top:335px;font-size:11.5px;font-weight:normal;letter-spacing:-0.263px;color:#000'>Orsi, A. and Ryan, U. 2001. Locations of …</div>
<div class='a' style='left:147px;top:349px;width:740px;height:15px;background:#e9e7e3'></div>
<div id='r11t' class='tx' style='left:170.60px;top:350px;font-size:11.5px;font-weight:normal;letter-spacing:-0.276px;color:#000'>Antarctic suface elevation contours</div>
<div id='r11n' class='tx' style='left:389.40px;top:350px;font-size:11.5px;font-weight:normal;letter-spacing:-0.268px;color:#000'>antarctica_elevation_contours</div>
<div id='r11a' class='tx' style='left:583.80px;top:350px;font-size:11.5px;font-weight:normal;letter-spacing:-0.310px;color:#000'>Liu, H., K. Jezek, B. Li, and Z. Zhao. 200…</div>
<div id='r12t' class='tx' style='left:170.60px;top:365px;font-size:11.5px;font-weight:normal;letter-spacing:-0.381px;color:#000'>Antarctica border</div>
<div id='r12n' class='tx' style='left:389.40px;top:365px;font-size:11.5px;font-weight:normal;letter-spacing:-0.267px;color:#000'>antarctica_country_border</div>
<div id='r12a' class='tx' style='left:583.80px;top:365px;font-size:11.5px;font-weight:normal;letter-spacing:-0.272px;color:#000'>Bohlander, J. and T. Scambos. 2007. Ant…</div>
<div class='a' style='left:147px;top:379px;width:740px;height:15px;background:#e9e7e3'></div>
<div id='r13t' class='tx' style='left:169.60px;top:380px;font-size:11.5px;font-weight:normal;letter-spacing:-0.306px;color:#000'>coastlines (excluding Antarctica)</div>
<div id='r13n' class='tx' style='left:389.40px;top:380px;font-size:11.5px;font-weight:normal;letter-spacing:-0.359px;color:#000'>coastlines_excluding_antarctica</div>
<div id='r13a' class='tx' style='left:583.80px;top:380px;font-size:11.5px;font-weight:normal;letter-spacing:-0.213px;color:#000'>Center for International Earth Science Inf…</div>
<div id='r14t' class='tx' style='left:169.60px;top:395px;font-size:11.5px;font-weight:normal;letter-spacing:-0.257px;color:#000'>countries (excluding Antarctica)</div>
<div id='r14n' class='tx' style='left:389.40px;top:395px;font-size:11.5px;font-weight:normal;letter-spacing:-0.292px;color:#000'>country_borders_excluding_antarctica</div>
<div id='r14a' class='tx' style='left:583.80px;top:395px;font-size:11.5px;font-weight:normal;letter-spacing:-0.213px;color:#000'>Center for International Earth Science Inf…</div>
<div class='a' style='left:147px;top:409px;width:740px;height:15px;background:#e9e7e3'></div>
<div id='r15t' class='tx' style='left:169.60px;top:410px;font-size:11.5px;font-weight:normal;letter-spacing:-0.438px;color:#000'>glacier outlines</div>
<div id='r15n' class='tx' style='left:389.40px;top:410px;font-size:11.5px;font-weight:normal;letter-spacing:-0.434px;color:#000'>glacier_outlines</div>
<div id='r15a' class='tx' style='left:584.80px;top:410px;font-size:11.5px;font-weight:normal;letter-spacing:-0.292px;color:#000'>Armstrong, R., B. Raup, S.J.S. Khalsa, R…</div>
<div id='r16t' class='tx' style='left:169.60px;top:425px;font-size:11.5px;font-weight:normal;letter-spacing:-0.500px;color:#000;transform:scaleX(0.9739);transform-origin:0 0'>glaciers</div>
<div id='r16n' class='tx' style='left:389.40px;top:425px;font-size:11.5px;font-weight:normal;letter-spacing:-0.500px;color:#000;transform:scaleX(0.9740);transform-origin:0 0'>glaciers</div>
<div id='r16a' class='tx' style='left:583.80px;top:425px;font-size:11.5px;font-weight:normal;letter-spacing:-0.391px;color:#000'>National Imagery and Mapping Agency (N…</div>
<div class='a' style='left:147px;top:439px;width:740px;height:15px;background:#e9e7e3'></div>
<div id='r17t' class='tx' style='left:169.60px;top:440px;font-size:11.5px;font-weight:normal;letter-spacing:-0.264px;color:#000'>International Date Line</div>
<div id='r17n' class='tx' style='left:389.40px;top:440px;font-size:11.5px;font-weight:normal;letter-spacing:-0.257px;color:#000'>international_date_line</div>
<div id='r17a' class='tx' style='left:583.80px;top:440px;font-size:11.5px;font-weight:normal;letter-spacing:-0.333px;color:#000'>National Geographic Society. 1992. Natio…</div>
<div id='r18t' class='tx' style='left:169.60px;top:455px;font-size:11.5px;font-weight:normal;letter-spacing:-0.294px;color:#000'>land (excluding Antarctica)</div>
<div id='r18n' class='tx' style='left:389.40px;top:455px;font-size:11.5px;font-weight:normal;letter-spacing:-0.356px;color:#000'>land_excluding_antarctica</div>
<div id='r18a' class='tx' style='left:583.80px;top:455px;font-size:11.5px;font-weight:normal;letter-spacing:-0.213px;color:#000'>Center for International Earth Science Inf…</div>
<div class='a' style='left:147px;top:469px;width:740px;height:15px;background:#e9e7e3'></div>
<div id='r19t' class='tx' style='left:169.60px;top:470px;font-size:11.5px;font-weight:normal;letter-spacing:-0.443px;color:#000'>South Pole of Cold</div>
<div id='r19n' class='tx' style='left:389.40px;top:470px;font-size:11.5px;font-weight:normal;letter-spacing:-0.325px;color:#000'>south_pole_of_cold</div>
<div id='r19a' class='tx' style='left:584.80px;top:470px;font-size:11.5px;font-weight:normal;letter-spacing:-0.290px;color:#000'>Wikipedia contributors. 23 January 2007.…</div>
<div id='r20t' class='tx' style='left:169.60px;top:485px;font-size:11.5px;font-weight:normal;letter-spacing:-0.380px;color:#000'>South Pole of Inaccessibility</div>
<div id='r20n' class='tx' style='left:389.40px;top:485px;font-size:11.5px;font-weight:normal;letter-spacing:-0.424px;color:#000'>south_pole_inaccessibility</div>
<div id='r20a' class='tx' style='left:584.80px;top:485px;font-size:11.5px;font-weight:normal;letter-spacing:-0.290px;color:#000'>Wikipedia contributors. 20 January 2007.…</div>
<div class='a' style='left:147px;top:499px;width:740px;height:15px;background:#e9e7e3'></div>
<div id='r21t' class='tx' style='left:169.60px;top:500px;font-size:11.5px;font-weight:normal;letter-spacing:-0.467px;color:#000'>South Pole, Geographic</div>
<div id='r21n' class='tx' style='left:389.40px;top:500px;font-size:11.5px;font-weight:normal;letter-spacing:-0.360px;color:#000'>south_pole_geographic</div>
<div id='r21a' class='tx' style='left:583.80px;top:500px;font-size:11.5px;font-weight:normal;letter-spacing:-0.358px;color:#000'>Labels the location of the South Pole (90 …</div>
<div id='r22t' class='tx' style='left:169.60px;top:515px;font-size:11.5px;font-weight:normal;letter-spacing:-0.500px;color:#000'>South Pole, Geomagnetic</div>
<div id='r22n' class='tx' style='left:389.40px;top:515px;font-size:11.5px;font-weight:normal;letter-spacing:-0.387px;color:#000'>south_pole_geomagnetic</div>
<div id='r22a' class='tx' style='left:583.80px;top:515px;font-size:11.5px;font-weight:normal;letter-spacing:-0.454px;color:#000'>McClean, S. 24 January 2007. Geomagne…</div>
<div class='a' style='left:147px;top:529px;width:740px;height:15px;background:#e9e7e3'></div>
<div id='r23t' class='tx' style='left:169.60px;top:530px;font-size:11.5px;font-weight:normal;letter-spacing:-0.448px;color:#000'>South Pole, Magnetic</div>
<div id='r23n' class='tx' style='left:389.40px;top:530px;font-size:11.5px;font-weight:normal;letter-spacing:-0.401px;color:#000'>south_pole_magnetic</div>
<div id='r23a' class='tx' style='left:583.80px;top:530px;font-size:11.5px;font-weight:normal;letter-spacing:-0.454px;color:#000'>McClean, S. 24 January 2007. Geomagne…</div>
<div id='r24t' class='tx' style='left:169.60px;top:545px;font-size:11.5px;font-weight:normal;letter-spacing:-0.500px;color:#000;transform:scaleX(0.9651);transform-origin:0 0'>South Poles</div>
<div id='r24n' class='tx' style='left:389.40px;top:545px;font-size:11.5px;font-weight:normal;letter-spacing:-0.321px;color:#000'>south_poles_wfs</div>
<div id='r24a' class='tx' style='left:583.80px;top:545px;font-size:11.5px;font-weight:normal;letter-spacing:-0.298px;color:#000'>Labels the location of various types of So…</div>
<div class='a' style='left:147px;top:616px;width:740px;height:14px;background:linear-gradient(#fdfdfd,#efefef);border-top:1px solid #d0d0d0'></div>
<div class='a' style='left:160px;top:617px;width:1px;height:13px;background:#d0d0d0'></div>
<svg class='a' style='left:151px;top:619px' width='4' height='8'><path d='M4 0 L0 4 L4 8Z' fill='#606060'/></svg>
<div class='a' style='left:862px;top:617px;width:12px;height:13px;background:#e5e5e5;border-left:1px solid #c8c8c8;border-right:1px solid #c8c8c8'></div>
<svg class='a' style='left:878px;top:619px' width='4' height='8'><path d='M0 0 L4 4 L0 8Z' fill='#606060'/></svg>
<div class='a' style='left:144px;top:399px;width:1px;height:1px;background:#9a9a9a'></div>
<div class='a' style='left:144px;top:402px;width:1px;height:1px;background:#9a9a9a'></div>
<div class='a' style='left:144px;top:405px;width:1px;height:1px;background:#9a9a9a'></div>
<div class='a' style='left:144px;top:408px;width:1px;height:1px;background:#9a9a9a'></div>
<div class='a' style='left:144px;top:411px;width:1px;height:1px;background:#9a9a9a'></div>
<div class='a' style='left:144px;top:414px;width:1px;height:1px;background:#9a9a9a'></div>
<div class='a' style='left:146px;top:639px;width:14px;height:14px;border:1px solid #adadad;background:#fff'></div>
<div id='cb1' class='tx' style='left:164.00px;top:640px;font-size:11.5px;font-weight:normal;letter-spacing:-0.289px;color:#000'>Use title for layer name</div>
<div class='a' style='left:146px;top:665px;width:14px;height:14px;border:1px solid #adadad;background:#fff'></div>
<svg class='a' style='left:146px;top:665px' width='14' height='14' viewBox='0 0 14 14'><path d='M3.2 6.8 L6 11.3 L10.8 3.5' fill='none' stroke='#000' stroke-width='1.9'/></svg>
<div id='cb2' class='tx' style='left:164.00px;top:666px;font-size:11.5px;font-weight:normal;letter-spacing:-0.165px;color:#000'>Only request features overlapping the view extent</div>
<div id='crs' class='tx' style='left:148.00px;top:690px;font-size:11.5px;font-weight:bold;letter-spacing:0.151px;color:#000'>Coordinate Reference System</div>
<div class='grp' style='left:147px;top:706px;width:741px;height:45px'></div>
<div id='epsg' class='tx' style='left:157.80px;top:721px;font-size:11.5px;font-weight:normal;letter-spacing:-0.500px;color:#000;transform:scaleX(0.9302);transform-origin:0 0'>EPSG:3031</div>
<div class='btn' style='left:796px;top:717px;width:80px'></div>
<div id='b_change' class='tx' style='left:812.20px;top:721px;font-size:11.5px;font-weight:normal;letter-spacing:-0.500px;color:#000;transform:scaleX(0.9588);transform-origin:0 0'>Change…</div>
<div class='btn' style='left:550px;top:757px;width:80px'></div>
<div id='b_Build_query' class='tx' style='left:562.40px;top:761px;font-size:11.5px;font-weight:normal;letter-spacing:-0.500px;color:#000'><u>B</u>uild query</div>
<div class='btn' style='left:636px;top:757px;width:80px'></div>
<div id='b_Close' class='tx' style='left:662.20px;top:761px;font-size:11.5px;font-weight:normal;letter-spacing:-0.500px;color:#000;transform:scaleX(0.9300);transform-origin:0 0'>Close</div>
<div class='btn' style='left:722px;top:757px;width:80px'></div>
<div id='b_Add' class='tx' style='left:751.40px;top:761px;font-size:11.5px;font-weight:normal;letter-spacing:-0.500px;color:#000;transform:scaleX(0.9535);transform-origin:0 0'><u>A</u>dd</div>
<div class='btn' style='left:808px;top:757px;width:80px'></div>
<div id='b_Help' class='tx' style='left:836.80px;top:761px;font-size:11.5px;font-weight:normal;letter-spacing:-0.500px;color:#000;transform:scaleX(0.9555);transform-origin:0 0'>Help</div>
</body></html>
